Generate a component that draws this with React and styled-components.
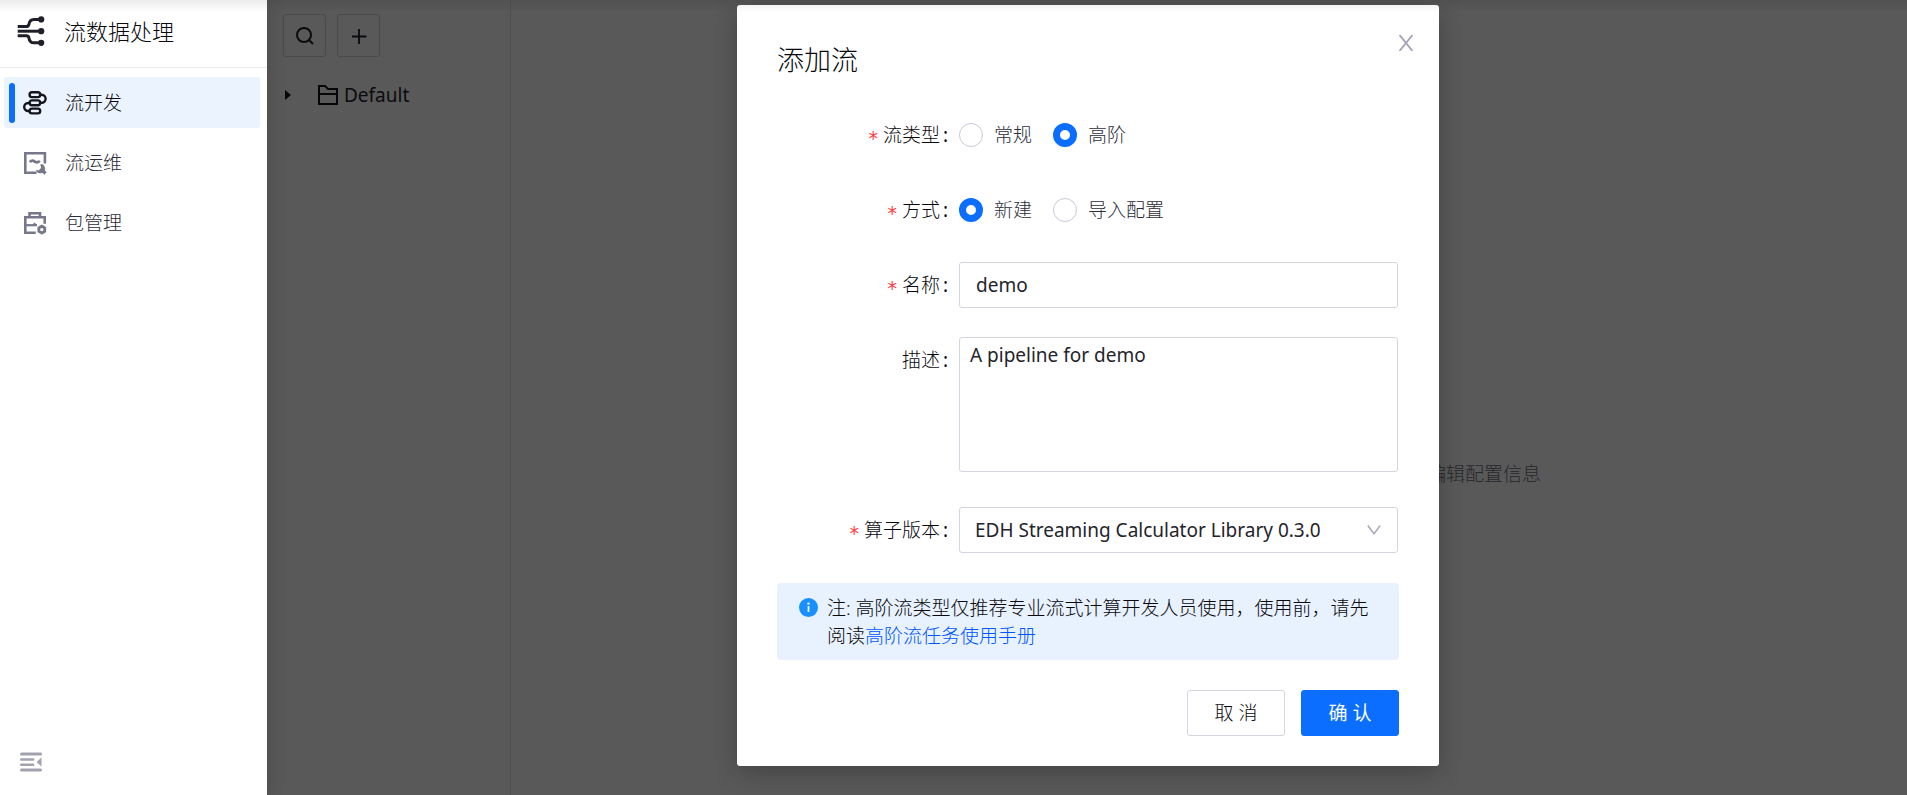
import React, { useState } from "react";
import styled, { createGlobalStyle } from "styled-components";

const menuItems = [
  { key: "dev", label: "流开发", icon: <FlowIcon /> },
  { key: "ops", label: "流运维", icon: <OpsIcon /> },
  { key: "package", label: "包管理", icon: <PackageIcon /> },
];

function App() {
  const [active, setActive] = useState("dev");
  const [type, setType] = useState("advanced");
  const [mode, setMode] = useState("create");
  const [name, setName] = useState("demo");
  const [desc, setDesc] = useState("A pipeline for demo");

  return (
    <Page>
      <GlobalStyle />
      <Sidebar>
        <Brand>
          <LogoIcon />
          流数据处理
        </Brand>
        <Menu>
          {menuItems.map((item) => (
            <li key={item.key}>
              <MenuLink
                href={`#${item.key}`}
                $active={item.key === active}
                onClick={() => setActive(item.key)}
              >
                {item.icon}
                {item.label}
              </MenuLink>
            </li>
          ))}
        </Menu>
        <CollapseButton aria-label="收起">
          <CollapseIcon />
        </CollapseButton>
      </Sidebar>

      <Content>
        <TreePanel>
          <Toolbar>
            <ToolButton aria-label="搜索">
              <SearchIcon />
            </ToolButton>
            <ToolButton aria-label="新增">
              <PlusIcon />
            </ToolButton>
          </Toolbar>
          <TreeNode>
            <Caret />
            <FolderIcon />
            Default
          </TreeNode>
        </TreePanel>
        <Workspace>
          <Hint>编辑配置信息</Hint>
        </Workspace>

        <Mask>
          <Modal role="dialog" aria-labelledby="modal-title">
            <CloseButton aria-label="关闭">
              <CloseIcon />
            </CloseButton>
            <Title id="modal-title">添加流</Title>
            <Form onSubmit={(e) => e.preventDefault()}>
              <Row role="radiogroup" aria-labelledby="type-label">
                <Label as="span" id="type-label" $required>
                  流类型
                </Label>
                <RadioGroup>
                  <RadioLabel>
                    <Radio
                      name="type"
                      checked={type === "normal"}
                      onChange={() => setType("normal")}
                    />
                    常规
                  </RadioLabel>
                  <RadioLabel>
                    <Radio
                      name="type"
                      checked={type === "advanced"}
                      onChange={() => setType("advanced")}
                    />
                    高阶
                  </RadioLabel>
                </RadioGroup>
              </Row>
              <Row role="radiogroup" aria-labelledby="mode-label">
                <Label as="span" id="mode-label" $required>
                  方式
                </Label>
                <RadioGroup>
                  <RadioLabel>
                    <Radio
                      name="mode"
                      checked={mode === "create"}
                      onChange={() => setMode("create")}
                    />
                    新建
                  </RadioLabel>
                  <RadioLabel>
                    <Radio
                      name="mode"
                      checked={mode === "import"}
                      onChange={() => setMode("import")}
                    />
                    导入配置
                  </RadioLabel>
                </RadioGroup>
              </Row>
              <Row>
                <Label htmlFor="name" $required>
                  名称
                </Label>
                <Input
                  id="name"
                  value={name}
                  onChange={(e) => setName(e.target.value)}
                />
              </Row>
              <Row>
                <Label htmlFor="desc">描述</Label>
                <TextArea
                  id="desc"
                  value={desc}
                  onChange={(e) => setDesc(e.target.value)}
                />
              </Row>
              <Row>
                <Label htmlFor="version" $required>
                  算子版本
                </Label>
                <SelectBox>
                  <Select id="version">
                    <option>EDH Streaming Calculator Library 0.3.0</option>
                  </Select>
                  <ChevronIcon />
                </SelectBox>
              </Row>
              <Notice>
                <InfoIcon />
                <p>
                  注: 高阶流类型仅推荐专业流式计算开发人员使用，使用前，请先阅读
                  <a href="#manual">高阶流任务使用手册</a>
                </p>
              </Notice>
              <Footer>
                <Button type="button">取 消</Button>
                <Button type="submit" $primary>
                  确 认
                </Button>
              </Footer>
            </Form>
          </Modal>
        </Mask>
      </Content>
      <TopShade />
    </Page>
  );
}

export default App;

function LogoIcon() {
  return (
    <svg width="28" height="32" viewBox="0 0 28 32" fill="none">
      <g stroke="#1f1f29" strokeWidth="3">
        <path d="M.7 16.2H24" />
        <path d="M.7 11.6h8.6c1.6 0 2.3-.7 2.6-2.2.5-3.2 1.8-5 5-5H24" />
        <path d="M.7 20.8h8.6c1.6 0 2.3.7 2.6 2.1.5 3.1 1.8 4.9 5 4.9H24" />
      </g>
      <g fill="#1f1f29">
        <circle cx="24.2" cy="4.4" r="3.1" />
        <circle cx="24.2" cy="16.2" r="3.1" />
        <circle cx="24.2" cy="27.8" r="3.1" />
      </g>
    </svg>
  );
}

function FlowIcon() {
  return (
    <svg width="24" height="24" viewBox="0 0 24 24" fill="none">
      <g stroke="#14141c" strokeWidth="2.4">
        <rect x="6.6" y="1.3" width="10.6" height="4.8" rx="2.4" />
        <rect x="6.6" y="9.4" width="10.6" height="4.8" rx="2.4" />
        <rect x="6.6" y="17.6" width="10.6" height="4.8" rx="2.4" />
        <path d="M17.2 3.7h1.4a4 4 0 0 1 0 8h-1.4M6.6 12H5.2a4 4 0 0 0 0 8h1.4" />
      </g>
    </svg>
  );
}

function OpsIcon() {
  return (
    <svg width="24" height="24" viewBox="0 0 24 24" fill="none">
      <g stroke="#76788a" strokeWidth="2.6">
        <path d="M21.9 12.5V2.3H2.3v19.5h11.2" />
        <path d="M6.8 11.2c1.7-2 3.4-1.8 5-.6s3.3 1 5-.8" />
        <path d="m18.500 18.500 4 4" strokeWidth="3.2" />
      </g>
      <path
        d="M17.400 13a4.600 4.600 0 1 1-4.500 5.700l2.700.7 2.400-2.300z"
        fill="#76788a"
      />
    </svg>
  );
}

function PackageIcon() {
  return (
    <svg width="24" height="24" viewBox="0 0 24 24" fill="none">
      <g stroke="#76788a" strokeWidth="2.6">
        <path d="M6.500 6V2.300H17V6" />
        <path d="M21.700 12.700V6.300H2.300v15.500h10.500" />
        <path d="M2.300 14.200H14" strokeWidth="2.2" />
        <circle cx="18.800" cy="18.600" r="3.1" strokeWidth="2.8" />
      </g>
      <path d="M9 14l2.500-2.500L14 14z" fill="#76788a" />
      <path
        d="M18.800 13.700v9.800M14.600 16.200l8.400 4.900M14.600 21.100l8.400-4.900"
        stroke="#76788a"
        strokeWidth="1.6"
        strokeDasharray="1.5 6.8"
      />
    </svg>
  );
}

function CollapseIcon() {
  return (
    <svg width="22" height="20" viewBox="0 0 22 20" fill="none">
      <g stroke="#a2a1b0" strokeLinecap="round">
        <path d="M1.500 2h19M1.500 18h19" strokeWidth="3" />
        <path d="M1.200 7.500h12M1.200 12.700h12" strokeWidth="2.4" />
      </g>
      <path d="m16.500 10 5-4.500v9z" fill="#a2a1b0" />
    </svg>
  );
}

function SearchIcon() {
  return (
    <svg width="20" height="20" viewBox="0 0 20 20" fill="none">
      <g stroke="#20202a" strokeWidth="2">
        <circle cx="9" cy="9" r="7" />
        <path d="m13.500 13.500 4.500 4.500" />
      </g>
    </svg>
  );
}

function PlusIcon() {
  return (
    <svg width="20" height="20" viewBox="0 0 20 20" fill="none">
      <path d="M10 3v15M3 10.500h14.500" stroke="#20202a" strokeWidth="1.8" />
    </svg>
  );
}

function FolderIcon() {
  return (
    <svg width="20" height="20" viewBox="0 0 20 20" fill="none">
      <path d="M1 1h6l3 3h9v15H1zM1 9h18" stroke="#14141c" strokeWidth="2" />
    </svg>
  );
}

function CloseIcon() {
  return (
    <svg width="16" height="16" viewBox="0 0 16 16" fill="none">
      <path d="M1.500 0l13 16M14.500 0l-13 16" stroke="#a5a4b5" strokeWidth="1.9" />
    </svg>
  );
}

function ChevronIcon() {
  return (
    <svg width="14" height="10" viewBox="0 0 14 10" fill="none">
      <path d="m.8.500 6.200 8.200L13.200.5" stroke="#a9a8b8" strokeWidth="1.5" />
    </svg>
  );
}

function InfoIcon() {
  return (
    <svg width="19" height="19" viewBox="0 0 19 19">
      <circle cx="9.5" cy="9.5" r="9.5" fill="#1890ff" />
      <path d="M9.500 8v6" stroke="#fff" strokeWidth="1.7" />
      <circle cx="9.5" cy="5.6" r="1.2" fill="#fff" />
    </svg>
  );
}

const GlobalStyle = createGlobalStyle`
  * {
    box-sizing: border-box;
  }

  body {
    margin: 0;
    color: #08080e;
    font-family: "Noto Sans", "Noto Sans CJK SC", sans-serif;
    font-size: 19px;
    font-weight: 300;
    line-height: 28px;
  }

  button,
  input,
  textarea,
  select {
    font: inherit;
    color: inherit;
  }

  svg {
    flex: none;
  }
`;

const Page = styled.div`
  display: flex;
  min-height: 100vh;
`;

const Sidebar = styled.aside`
  display: flex;
  flex-direction: column;
  flex: none;
  width: 267px;
  background: #fff;
  box-shadow: 0 0 20px rgba(0, 0, 0, 0.2);
  z-index: 2;
`;

const Brand = styled.div`
  display: flex;
  align-items: center;
  gap: 19px;
  height: 68px;
  padding: 0 17px 5px;
  border-bottom: 1px solid #ececef;
  font-size: 22px;
`;

const Menu = styled.ul`
  display: flex;
  flex-direction: column;
  gap: 9px;
  margin: 0;
  padding: 9px 7px 9px 4px;
  list-style: none;
`;

const MenuLink = styled.a`
  display: flex;
  align-items: center;
  gap: 18px;
  height: 51px;
  padding-left: 5px;
  border-radius: 3px;
  color: ${(props) => (props.$active ? "#08080e" : "#2c2d38")};
  background: ${(props) => (props.$active ? "#ebf3ff" : "transparent")};
  text-decoration: none;

  &::before {
    content: "";
    width: 6px;
    height: 40px;
    margin-right: -10px;
    border-radius: 3px;
    background: ${(props) => (props.$active ? "#0b6eff" : "transparent")};
  }
`;

const CollapseButton = styled.button`
  display: flex;
  align-self: flex-start;
  margin-top: auto;
  padding: 0 20px 23px;
  border: 0;
  background: none;
  cursor: pointer;
`;

const Content = styled.main`
  position: relative;
  display: flex;
  flex: 1;
`;

const TreePanel = styled.section`
  flex: none;
  width: 244px;
  padding: 14px 16px;
  border-right: 1px solid #e4e4ea;
`;

const Toolbar = styled.div`
  display: flex;
  gap: 11px;
`;

const ToolButton = styled.button`
  display: flex;
  justify-content: center;
  align-items: center;
  width: 43px;
  height: 43px;
  padding: 0;
  border: 1px solid #d3d3dc;
  border-radius: 3px;
  background: #fff;
`;

const TreeNode = styled.div`
  display: flex;
  align-items: center;
  gap: 6px;
  margin-top: 24px;
  color: #24242c;
  font-weight: 400;
`;

const Caret = styled.span`
  margin: 0 21px 0 2px;
  border: 5px solid transparent;
  border-left: 6px solid #14141c;
  border-right: 0;
`;

const Workspace = styled.section`
  display: flex;
  justify-content: center;
  align-items: center;
  flex: 1;
  padding-top: 153px;
`;

const Hint = styled.p`
  width: 664px;
  margin: 0;
  color: #6f7080;
  text-align: right;
`;

const Mask = styled.div`
  position: absolute;
  inset: 0;
  padding: 5px 15px 29px 17px;
  background: rgba(0, 0, 0, 0.65);
`;

const Modal = styled.div`
  position: relative;
  max-width: 702px;
  margin: 0 auto;
  padding: 40px 40px 30px;
  border-radius: 3px;
  background: #fff;
  box-shadow: 0 6px 24px rgba(0, 0, 0, 0.25);
`;

const CloseButton = styled.button`
  position: absolute;
  top: 22px;
  right: 17px;
  display: flex;
  padding: 8px;
  border: 0;
  background: none;
  cursor: pointer;
`;

const Title = styled.h1`
  margin: 0 0 38px;
  font-size: 27px;
  font-weight: 300;
  line-height: 29px;
`;

const Form = styled.form`
  display: flex;
  flex-direction: column;
`;

const Row = styled.div`
  display: flex;
  margin-bottom: 29px;
  padding-right: 1px;
`;

const Label = styled.label`
  display: flex;
  justify-content: flex-end;
  align-items: center;
  flex: none;
  width: 182px;
  height: 46px;
  padding-right: 11px;

  &::before {
    content: "${(props) => (props.$required ? "*" : "")}";
    margin: 5px 4px 0 0;
    color: #ff3b41;
    font-family: "DejaVu Sans Mono", monospace;
    font-size: 19px;
  }

  &::after {
    content: ":";
    margin-left: 3px;
    font-weight: 400;
  }
`;

const RadioGroup = styled.div`
  display: flex;
  align-items: center;
  gap: 21px;
`;

const RadioLabel = styled.label`
  display: flex;
  align-items: center;
  gap: 11px;
  color: #2c2d38;
`;

const Radio = styled.input.attrs({ type: "radio" })`
  width: 24px;
  height: 24px;
  margin: 0;
  border: 1px solid #c9c8d6;
  border-radius: 50%;
  background: #fff;
  appearance: none;

  &:checked {
    border: 7px solid #0b6eff;
  }
`;

const Input = styled.input`
  flex: 1;
  min-width: 0;
  height: 46px;
  padding: 0 16px;
  border: 1px solid #d5d5df;
  border-radius: 3px;
  color: #24242c;
  font-weight: 400;
`;

const TextArea = styled.textarea`
  flex: 1;
  min-width: 0;
  height: 135px;
  margin-bottom: 6px;
  padding: 3px 10px;
  border: 1px solid #d5d5df;
  border-radius: 3px;
  color: #24242c;
  font-weight: 400;
  resize: none;
`;

const SelectBox = styled.div`
  position: relative;
  flex: 1;

  svg {
    position: absolute;
    top: 18px;
    right: 17px;
    pointer-events: none;
  }
`;

const Select = styled.select`
  width: 100%;
  height: 46px;
  padding: 0 40px 0 15px;
  border: 1px solid #d5d5df;
  border-radius: 3px;
  background: #fff;
  color: #24242c;
  font-weight: 400;
  appearance: none;
`;

const Notice = styled.div`
  display: flex;
  gap: 9px;
  margin-top: 1px;
  padding: 11px 22px 10px;
  border-radius: 3px;
  background: #e8f2ff;

  svg {
    margin-top: 4px;
  }

  p {
    margin: 0;
  }

  a {
    color: #0055ff;
    text-decoration: none;
  }
`;

const Footer = styled.div`
  display: flex;
  justify-content: flex-end;
  gap: 16px;
  margin-top: 30px;
`;

const Button = styled.button`
  width: 98px;
  height: 46px;
  padding: 0;
  border: 1px solid ${(props) => (props.$primary ? "#0b6eff" : "#d5d5df")};
  border-radius: 3px;
  background: ${(props) => (props.$primary ? "#0b6eff" : "#fff")};
  color: ${(props) => (props.$primary ? "#fff" : "#08080e")};
  font-weight: ${(props) => (props.$primary ? 400 : 300)};
  cursor: pointer;
`;

const TopShade = styled.div`
  position: fixed;
  top: 0;
  left: 0;
  right: 0;
  z-index: 3;
  height: 12px;
  background: linear-gradient(rgba(0, 0, 0, 0.08), transparent);
  pointer-events: none;
`;
